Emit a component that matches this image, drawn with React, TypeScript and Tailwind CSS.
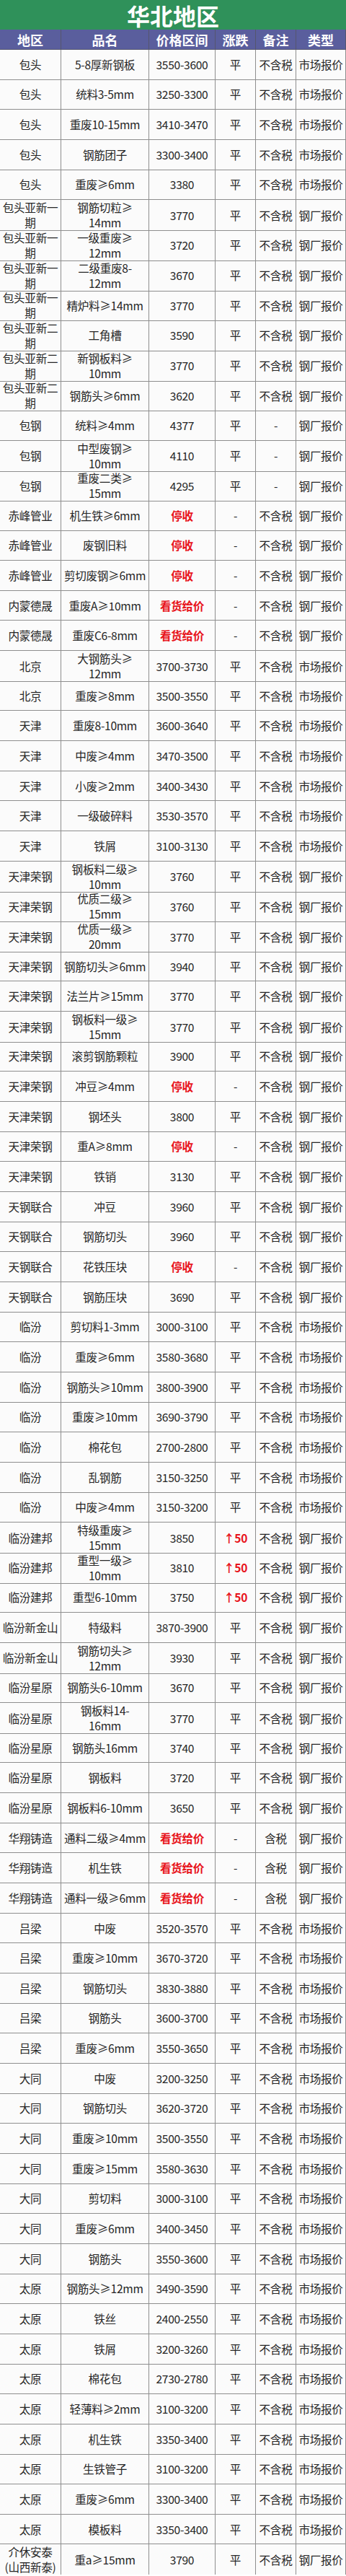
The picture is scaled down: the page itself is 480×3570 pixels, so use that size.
const rows: string[][] = [
  ['包头', '5-8厚新钢板', '3550-3600', '平', '不含税', '市场报价'],
  ['包头', '统料3-5mm', '3250-3300', '平', '不含税', '市场报价'],
  ['包头', '重废10-15mm', '3410-3470', '平', '不含税', '市场报价'],
  ['包头', '钢筋团子', '3300-3400', '平', '不含税', '市场报价'],
  ['包头', '重废≥6mm', '3380', '平', '不含税', '市场报价'],
  ['包头亚新一期', '钢筋切粒≥\n14mm', '3770', '平', '不含税', '钢厂报价'],
  ['包头亚新一期', '一级重废≥\n12mm', '3720', '平', '不含税', '钢厂报价'],
  ['包头亚新一期', '二级重废8-\n12mm', '3670', '平', '不含税', '钢厂报价'],
  ['包头亚新一期', '精炉料≥14mm', '3770', '平', '不含税', '钢厂报价'],
  ['包头亚新二期', '工角槽', '3590', '平', '不含税', '钢厂报价'],
  ['包头亚新二期', '新钢板料≥\n10mm', '3770', '平', '不含税', '钢厂报价'],
  ['包头亚新二期', '钢筋头≥6mm', '3620', '平', '不含税', '钢厂报价'],
  ['包钢', '统料≥4mm', '4377', '平', '-', '钢厂报价'],
  ['包钢', '中型废钢≥\n10mm', '4110', '平', '-', '钢厂报价'],
  ['包钢', '重废二类≥\n15mm', '4295', '平', '-', '钢厂报价'],
  ['赤峰管业', '机生铁≥6mm', '停收', '-', '不含税', '钢厂报价'],
  ['赤峰管业', '废钢旧料', '停收', '-', '不含税', '钢厂报价'],
  ['赤峰管业', '剪切废钢≥6mm', '停收', '-', '不含税', '钢厂报价'],
  ['内蒙德晟', '重废A≥10mm', '看货给价', '-', '不含税', '钢厂报价'],
  ['内蒙德晟', '重废C6-8mm', '看货给价', '-', '不含税', '钢厂报价'],
  ['北京', '大钢筋头≥\n12mm', '3700-3730', '平', '不含税', '市场报价'],
  ['北京', '重废≥8mm', '3500-3550', '平', '不含税', '市场报价'],
  ['天津', '重废8-10mm', '3600-3640', '平', '不含税', '市场报价'],
  ['天津', '中废≥4mm', '3470-3500', '平', '不含税', '市场报价'],
  ['天津', '小废≥2mm', '3400-3430', '平', '不含税', '市场报价'],
  ['天津', '一级破碎料', '3530-3570', '平', '不含税', '市场报价'],
  ['天津', '铁屑', '3100-3130', '平', '不含税', '市场报价'],
  ['天津荣钢', '钢板料二级≥\n10mm', '3760', '平', '不含税', '钢厂报价'],
  ['天津荣钢', '优质二级≥\n15mm', '3760', '平', '不含税', '钢厂报价'],
  ['天津荣钢', '优质一级≥\n20mm', '3770', '平', '不含税', '钢厂报价'],
  ['天津荣钢', '钢筋切头≥6mm', '3940', '平', '不含税', '钢厂报价'],
  ['天津荣钢', '法兰片≥15mm', '3770', '平', '不含税', '钢厂报价'],
  ['天津荣钢', '钢板料一级≥\n15mm', '3770', '平', '不含税', '钢厂报价'],
  ['天津荣钢', '滚剪钢筋颗粒', '3900', '平', '不含税', '钢厂报价'],
  ['天津荣钢', '冲豆≥4mm', '停收', '-', '不含税', '钢厂报价'],
  ['天津荣钢', '钢坯头', '3800', '平', '不含税', '钢厂报价'],
  ['天津荣钢', '重A≥8mm', '停收', '-', '不含税', '钢厂报价'],
  ['天津荣钢', '铁销', '3130', '平', '不含税', '钢厂报价'],
  ['天钢联合', '冲豆', '3960', '平', '不含税', '钢厂报价'],
  ['天钢联合', '钢筋切头', '3960', '平', '不含税', '钢厂报价'],
  ['天钢联合', '花铁压块', '停收', '-', '不含税', '钢厂报价'],
  ['天钢联合', '钢筋压块', '3690', '平', '不含税', '钢厂报价'],
  ['临汾', '剪切料1-3mm', '3000-3100', '平', '不含税', '市场报价'],
  ['临汾', '重废≥6mm', '3580-3680', '平', '不含税', '市场报价'],
  ['临汾', '钢筋头≥10mm', '3800-3900', '平', '不含税', '市场报价'],
  ['临汾', '重废≥10mm', '3690-3790', '平', '不含税', '市场报价'],
  ['临汾', '棉花包', '2700-2800', '平', '不含税', '市场报价'],
  ['临汾', '乱钢筋', '3150-3250', '平', '不含税', '市场报价'],
  ['临汾', '中废≥4mm', '3150-3200', '平', '不含税', '市场报价'],
  ['临汾建邦', '特级重废≥\n15mm', '3850', '↑50', '不含税', '钢厂报价'],
  ['临汾建邦', '重型一级≥\n10mm', '3810', '↑50', '不含税', '钢厂报价'],
  ['临汾建邦', '重型6-10mm', '3750', '↑50', '不含税', '钢厂报价'],
  ['临汾新金山', '特级料', '3870-3900', '平', '不含税', '钢厂报价'],
  ['临汾新金山', '钢筋切头≥\n12mm', '3930', '平', '不含税', '钢厂报价'],
  ['临汾星原', '钢筋头6-10mm', '3670', '平', '不含税', '钢厂报价'],
  ['临汾星原', '钢板料14-\n16mm', '3770', '平', '不含税', '钢厂报价'],
  ['临汾星原', '钢筋头16mm', '3740', '平', '不含税', '钢厂报价'],
  ['临汾星原', '钢板料', '3720', '平', '不含税', '钢厂报价'],
  ['临汾星原', '钢板料6-10mm', '3650', '平', '不含税', '钢厂报价'],
  ['华翔铸造', '通料二级≥4mm', '看货给价', '-', '含税', '钢厂报价'],
  ['华翔铸造', '机生铁', '看货给价', '-', '含税', '钢厂报价'],
  ['华翔铸造', '通料一级≥6mm', '看货给价', '-', '含税', '钢厂报价'],
  ['吕梁', '中废', '3520-3570', '平', '不含税', '市场报价'],
  ['吕梁', '重废≥10mm', '3670-3720', '平', '不含税', '市场报价'],
  ['吕梁', '钢筋切头', '3830-3880', '平', '不含税', '市场报价'],
  ['吕梁', '钢筋头', '3600-3700', '平', '不含税', '市场报价'],
  ['吕梁', '重废≥6mm', '3550-3650', '平', '不含税', '市场报价'],
  ['大同', '中废', '3200-3250', '平', '不含税', '市场报价'],
  ['大同', '钢筋切头', '3620-3720', '平', '不含税', '市场报价'],
  ['大同', '重废≥10mm', '3500-3550', '平', '不含税', '市场报价'],
  ['大同', '重废≥15mm', '3580-3630', '平', '不含税', '市场报价'],
  ['大同', '剪切料', '3000-3100', '平', '不含税', '市场报价'],
  ['大同', '重废≥6mm', '3400-3450', '平', '不含税', '市场报价'],
  ['大同', '钢筋头', '3550-3600', '平', '不含税', '市场报价'],
  ['太原', '钢筋头≥12mm', '3490-3590', '平', '不含税', '市场报价'],
  ['太原', '铁丝', '2400-2550', '平', '不含税', '市场报价'],
  ['太原', '铁屑', '3200-3260', '平', '不含税', '市场报价'],
  ['太原', '棉花包', '2730-2780', '平', '不含税', '市场报价'],
  ['太原', '轻薄料≥2mm', '3100-3200', '平', '不含税', '市场报价'],
  ['太原', '机生铁', '3350-3400', '平', '不含税', '市场报价'],
  ['太原', '生铁管子', '3100-3200', '平', '不含税', '市场报价'],
  ['太原', '重废≥6mm', '3300-3400', '平', '不含税', '市场报价'],
  ['太原', '模板料', '3350-3400', '平', '不含税', '市场报价'],
  ['介休安泰\n(山西新泰)', '重a≥15mm', '3790', '平', '不含税', '钢厂报价'],
];

const headers = ['地区', '品名', '价格区间', '涨跌', '备注', '类型'];
const cols = 'grid grid-cols-[85px_122px_92px_56px_56px_69px]';

function Cell({ text, red }: { text: string; red?: boolean }) {
  return (
    <div
      className={`flex items-center justify-center border-r border-b border-[#8e8e8e] text-center whitespace-pre-line leading-[21px] tracking-[-0.3px] ${
        red ? 'font-bold text-[#e8141b]' : 'text-[#262626]'
      }`}
    >
      {text}
    </div>
  );
}

export default function App() {
  return (
    <div className="w-[480px] bg-white font-['Noto_Sans_CJK_SC','Noto_Sans',sans-serif]">
      <div className="flex h-[41px] items-center justify-center bg-[#2f915a] text-[32px] leading-none font-bold text-white">
        华北地区
      </div>
      <div className={`${cols} h-[28px] bg-[#5a5e9d] text-[18px] font-bold text-white`}>
        {headers.map((h) => (
          <div key={h} className="flex items-center justify-center border-r border-b border-[#55556e] leading-none">
            {h}
          </div>
        ))}
      </div>
      {rows.map((r, i) => {
        const priceRed = r[2] === '停收' || r[2] === '看货给价';
        const upRed = r[3].startsWith('↑');
        return (
          <div key={i} className={`${cols} h-[41.67px] bg-[#fbfbfb] text-[15.6px]`}>
            <Cell text={r[0]} />
            <Cell text={r[1]} />
            <Cell text={r[2]} red={priceRed} />
            <Cell text={r[3]} red={upRed} />
            <Cell text={r[4]} />
            <Cell text={r[5]} />
          </div>
        );
      })}
    </div>
  );
}
